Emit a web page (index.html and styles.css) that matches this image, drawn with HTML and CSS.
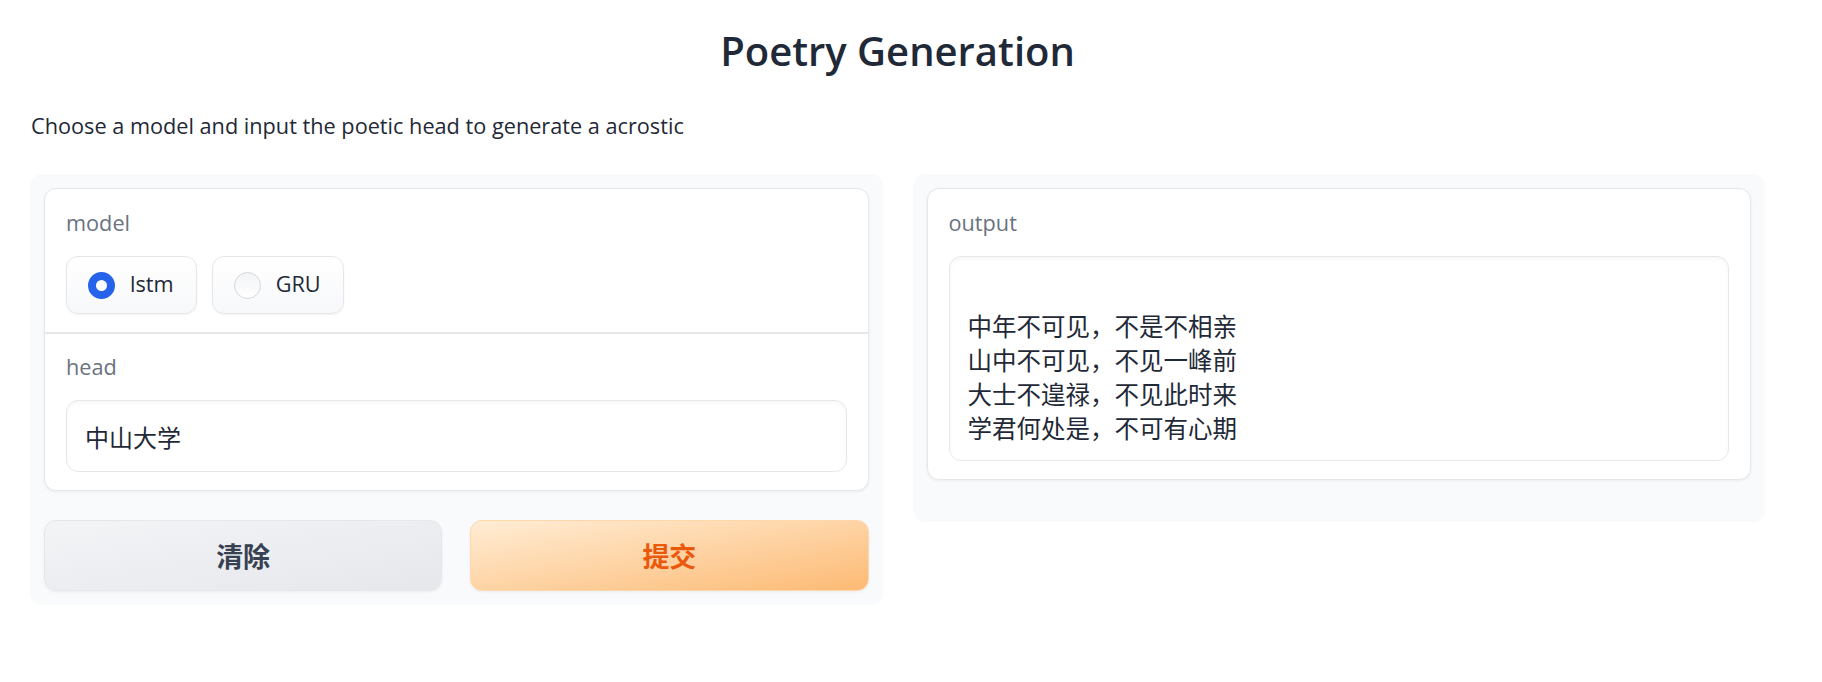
FILE: index.html
```html
<!DOCTYPE html>
<html lang="en">
<head>
<meta charset="utf-8">
<title>Poetry Generation</title>
<link rel="stylesheet" href="styles.css">
</head>
<body>
<div class="app">
  <h1 class="title">Poetry Generation</h1>
  <p class="desc">Choose a model and input the poetic head to generate a acrostic</p>
  <div class="row">
    <div class="panel">
      <div class="card">
        <div class="block block-first">
          <div class="label">model</div>
          <div class="radios">
            <label class="pill"><input class="radio" type="radio" name="model" checked><span class="pill-text">lstm</span></label>
            <label class="pill"><input class="radio" type="radio" name="model"><span class="pill-text">GRU</span></label>
          </div>
        </div>
        <div class="block block-next">
          <div class="label">head</div>
          <input class="textinput" type="text" value="中山大学">
        </div>
      </div>
      <div class="buttons">
        <button class="btn btn-clear">清除</button>
        <button class="btn btn-submit">提交</button>
      </div>
    </div>
    <div class="panel panel-out">
      <div class="card">
        <div class="block block-first">
          <div class="label">output</div>
          <div class="textbox"><div class="line">&nbsp;</div><div class="line">中年不可见，不是不相亲</div><div class="line">山中不可见，不见一峰前</div><div class="line">大士不遑禄，不见此时来</div><div class="line">学君何处是，不可有心期</div></div>
        </div>
      </div>
    </div>
  </div>
</div>
</body>
</html>
```

FILE: styles.css
```css
* { box-sizing: border-box; }

body {
  margin: 0;
  background: #ffffff;
  font-family: "Open Sans", "Noto Sans CJK SC", sans-serif;
  color: #1f2937;
}

.app {
  padding: 0 57px 0 30px;
}

.title {
  margin: 25px 0 0;
  text-align: center;
  font-size: 40px;
  line-height: 52px;
  font-weight: 600;
  color: #1f2937;
}

.desc {
  margin: 33px 0 0 1px;
  font-size: 21.7px;
  line-height: 32px;
  color: #1f2937;
}

.row {
  margin-top: 32px;
  display: grid;
  grid-template-columns: 1fr 1fr;
  gap: 30px;
  align-items: start;
}

.panel {
  background: #f9fafb;
  border-radius: 12px;
  padding: 14px;
}

.panel-out {
  padding-bottom: 42px;
}

.card {
  background: #ffffff;
  border: 1px solid #e5e7eb;
  border-radius: 12px;
  box-shadow: 0 1px 3px rgba(0, 0, 0, 0.06);
  overflow: hidden;
}

.block {
  padding: 16px 21px 18px;
}

.block-next {
  padding-top: 15px;
  border-top: 2px solid #e5e7eb;
}

.label {
  font-size: 21.7px;
  line-height: 36px;
  color: #6b7280;
  margin-bottom: 15px;
}

.radios {
  display: flex;
  gap: 15px;
}

.pill {
  display: flex;
  align-items: center;
  gap: 15px;
  height: 58px;
  padding: 0 22px 0 21px;
  border: 1px solid #e5e7eb;
  border-radius: 12px;
  background: linear-gradient(to bottom, #ffffff, #f7f8fa);
  box-shadow: 0 1px 2px rgba(0, 0, 0, 0.05);
  font-size: 21.7px;
  line-height: 36px;
  color: #1f2937;
}

.pill-text {
  margin-top: -3px;
}

.radio {
  appearance: none;
  -webkit-appearance: none;
  margin: 0;
  width: 27px;
  height: 27px;
  border-radius: 50%;
  border: 1px solid #d1d5db;
  background: linear-gradient(to bottom, #f3f4f6, #ffffff);
  flex: none;
}

.radio:checked {
  border: 8.5px solid #2563eb;
  background: #ffffff;
}

.textinput {
  display: block;
  width: 100%;
  height: 72px;
  margin: 0;
  padding: 0 18px;
  border: 1px solid #e5e7eb;
  border-radius: 12px;
  background: #ffffff;
  box-shadow: inset 0 2px 4px rgba(0, 0, 0, 0.035);
  font-family: "Noto Sans CJK SC", sans-serif;
  font-size: 24px;
  color: #1f2937;
  outline: none;
}

.textbox {
  height: 205px;
  padding: 18px 18px 15px;
  border: 1px solid #e5e7eb;
  border-radius: 12px;
  background: #ffffff;
  box-shadow: inset 0 2px 4px rgba(0, 0, 0, 0.035);
  font-family: "Noto Sans CJK SC", sans-serif;
  font-size: 24.5px;
  line-height: 34px;
  color: #1f2937;
}

.buttons {
  margin-top: 29px;
  display: grid;
  grid-template-columns: 1fr 1fr;
  gap: 28px;
}

.btn {
  height: 71px;
  border-radius: 12px;
  font-family: "Noto Sans CJK SC", sans-serif;
  font-size: 27px;
  font-weight: 700;
  box-shadow: 0 1px 3px rgba(0, 0, 0, 0.06);
  cursor: pointer;
}

.btn-clear {
  border: 1px solid #e5e7eb;
  background: linear-gradient(to bottom right, #f3f4f6, #e5e7eb);
  color: #374151;
}

.btn-submit {
  border: 1px solid #fed7aa;
  background: linear-gradient(to bottom right, #ffedd5, #fdba74);
  color: #ea580c;
}
```
